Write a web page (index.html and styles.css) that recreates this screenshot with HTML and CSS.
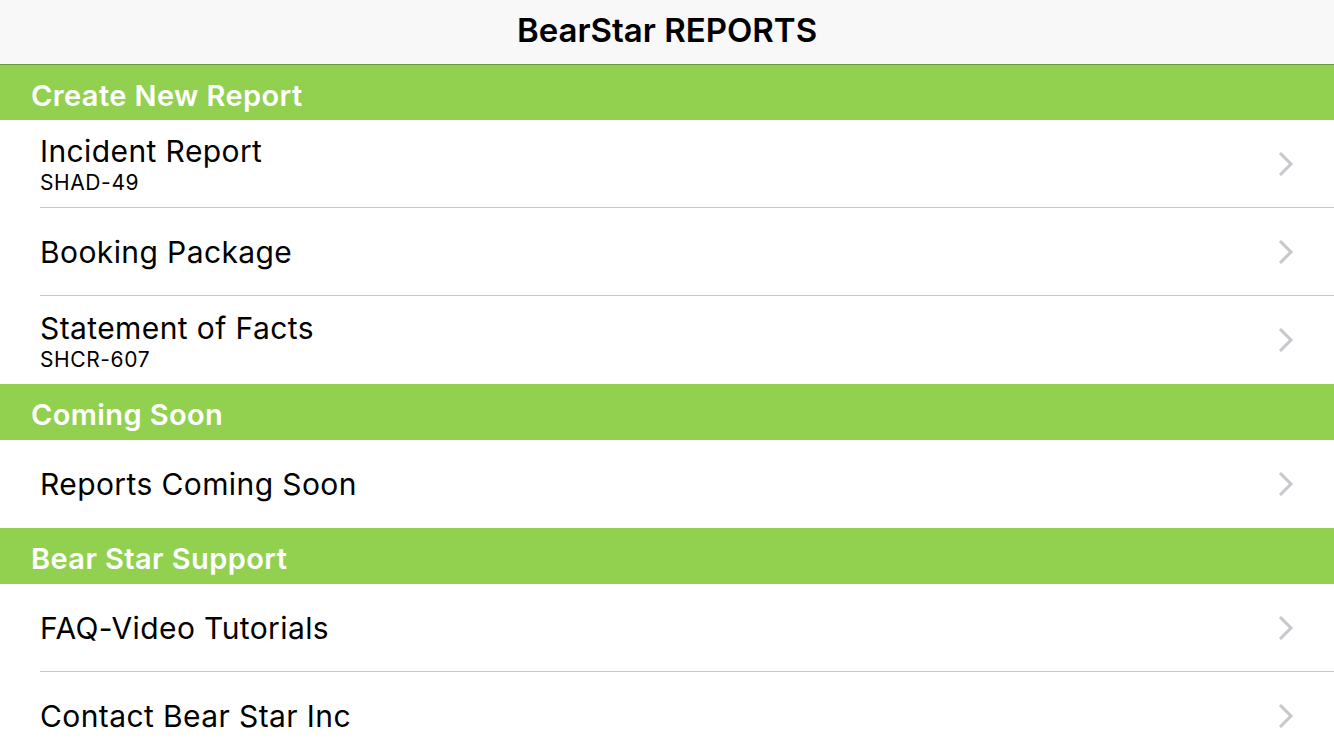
FILE: index.html
```html
<!DOCTYPE html>
<html lang="en">
<head>
    <meta charset="UTF-8">
    <meta name="viewport" content="width=device-width, initial-scale=1.0">
    <title>BearStar REPORTS</title>
    <link rel="stylesheet" href="styles.css">
</head>
<body>
    <div class="navbar">BearStar REPORTS</div>

    <div class="section-header first">Create New Report</div>
    <div class="row">
        <div class="row-inner">
            <div class="row-text">
                <div class="row-title">Incident Report</div>
                <div class="row-sub">SHAD-49</div>
            </div>
            <svg class="chevron" width="16" height="26" viewBox="0 0 16 26"><path d="M2 2 L13 13 L2 24" /></svg>
        </div>
    </div>
    <div class="row">
        <div class="row-inner">
            <div class="row-text">
                <div class="row-title">Booking Package</div>
            </div>
            <svg class="chevron" width="16" height="26" viewBox="0 0 16 26"><path d="M2 2 L13 13 L2 24" /></svg>
        </div>
    </div>
    <div class="row last">
        <div class="row-inner">
            <div class="row-text">
                <div class="row-title">Statement of Facts</div>
                <div class="row-sub">SHCR-607</div>
            </div>
            <svg class="chevron" width="16" height="26" viewBox="0 0 16 26"><path d="M2 2 L13 13 L2 24" /></svg>
        </div>
    </div>

    <div class="section-header">Coming Soon</div>
    <div class="row last">
        <div class="row-inner">
            <div class="row-text">
                <div class="row-title">Reports Coming Soon</div>
            </div>
            <svg class="chevron" width="16" height="26" viewBox="0 0 16 26"><path d="M2 2 L13 13 L2 24" /></svg>
        </div>
    </div>

    <div class="section-header">Bear Star Support</div>
    <div class="row">
        <div class="row-inner">
            <div class="row-text">
                <div class="row-title">FAQ-Video Tutorials</div>
            </div>
            <svg class="chevron" width="16" height="26" viewBox="0 0 16 26"><path d="M2 2 L13 13 L2 24" /></svg>
        </div>
    </div>
    <div class="row last">
        <div class="row-inner">
            <div class="row-text">
                <div class="row-title">Contact Bear Star Inc</div>
            </div>
            <svg class="chevron" width="16" height="26" viewBox="0 0 16 26"><path d="M2 2 L13 13 L2 24" /></svg>
        </div>
    </div>
</body>
</html>
```

FILE: styles.css
```css
body {
    margin: 0;
    font-family: Inter, "Noto Sans", sans-serif;
    background-color: white;
    color: black;
    overflow: hidden;
}
.navbar {
    height: 65px;
    background-color: #f8f8f8;
    border-bottom: 1px solid #6a9a40;
    display: flex;
    align-items: center;
    justify-content: center;
    font-size: 33px;
    font-weight: 600;
    padding-bottom: 4px;
    box-sizing: border-box;
}
.section-header {
    height: 56px;
    background-color: #92d150;
    color: white;
    font-size: 29px;
    font-weight: 600;
    letter-spacing: 0.4px;
    display: flex;
    align-items: center;
    padding-left: 31px;
    padding-top: 5px;
    box-sizing: border-box;
}
.section-header.first {
    height: 55px;
}
.row {
    height: 88px;
    padding-left: 40px;
}
.row-inner {
    height: 100%;
    box-sizing: border-box;
    border-bottom: 1px solid #c8c7cc;
    display: flex;
    align-items: center;
    padding-right: 40px;
}
.row.last .row-inner {
    border-bottom: none;
}
.row-text {
    flex: 1;
}
.row-title {
    font-size: 30px;
    line-height: 36px;
    letter-spacing: 0.4px;
}
.row-sub {
    font-size: 21px;
    line-height: 24px;
    letter-spacing: 0.6px;
    margin-top: 2px;
    margin-bottom: -1px;
}
.chevron path {
    fill: none;
    stroke: #c7c7cc;
    stroke-width: 3;
}
```
